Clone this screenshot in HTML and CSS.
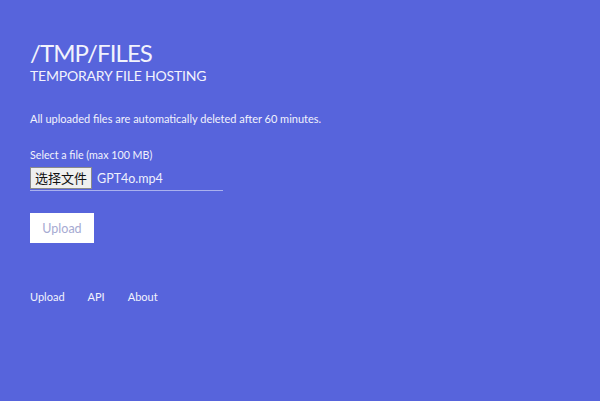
FILE: index.html
```html
<!DOCTYPE html>
<html>
<head>
<meta charset="utf-8">
<link rel="stylesheet" href="styles.css">
</head>
<body>
<main class="page">
  <header class="head">
    <h1 class="title">/TMP/FILES</h1>
    <h2 class="subtitle">TEMPORARY FILE HOSTING</h2>
  </header>
  <p class="note">All uploaded files are automatically deleted after 60 minutes.</p>
  <form class="form">
    <label class="label">Select a file (max 100 MB)</label>
    <div class="file">
      <span class="choose">选择文件</span>
      <span class="fname">GPT4o.mp4</span>
    </div>
    <button class="upload" type="button">Upload</button>
  </form>
  <nav class="nav">
    <a>Upload</a>
    <a>API</a>
    <a>About</a>
  </nav>
</main>
</body>
</html>
```
FILE: styles.css
```css
html, body {
  margin: 0;
  padding: 0;
  background: #5764dc;
  height: 100%;
}
body {
  font-family: Lato, "Noto Sans CJK SC", sans-serif;
  color: #f2f3fc;
}
.page {
  padding: 38px 30px 0;
  display: flex;
  flex-direction: column;
}
.head { display: flex; flex-direction: column; }
.title {
  margin: 0;
  font-size: 24px;
  font-weight: 400;
  line-height: 30px;
  letter-spacing: -0.9px;
}
.subtitle {
  margin: 0;
  font-size: 14px;
  font-weight: 400;
  line-height: 16px;
  letter-spacing: -0.2px;
}
.note {
  margin: 28px 0 0;
  font-size: 11px;
  line-height: 14px;
}
.form {
  margin-top: 22px;
  display: flex;
  flex-direction: column;
  align-items: flex-start;
}
.label {
  font-size: 10.7px;
  line-height: 14px;
}
.file {
  margin-top: 4px;
  width: 193px;
  height: 24px;
  display: flex;
  align-items: center;
  gap: 5px;
  border-bottom: 1px solid #aab1ee;
}
.choose {
  background: #efefef;
  color: #111;
  border: 1px solid #8a8a8a;
  font-size: 13px;
  line-height: 20px;
  padding: 0 4px;
  font-family: "Noto Sans CJK SC", sans-serif;
}
.fname {
  font-size: 12.5px;
  color: #eef0fc;
}
.upload {
  margin-top: 22px;
  width: 64px;
  height: 30px;
  background: #fff;
  border: none;
  color: #a6aad2;
  font-family: Lato, sans-serif;
  font-size: 12.5px;
  padding: 0;
}
.nav {
  margin-top: 47px;
  display: flex;
  gap: 23px;
  font-size: 11px;
  line-height: 14px;
}
.nav a { color: #f2f3fc; }
```
